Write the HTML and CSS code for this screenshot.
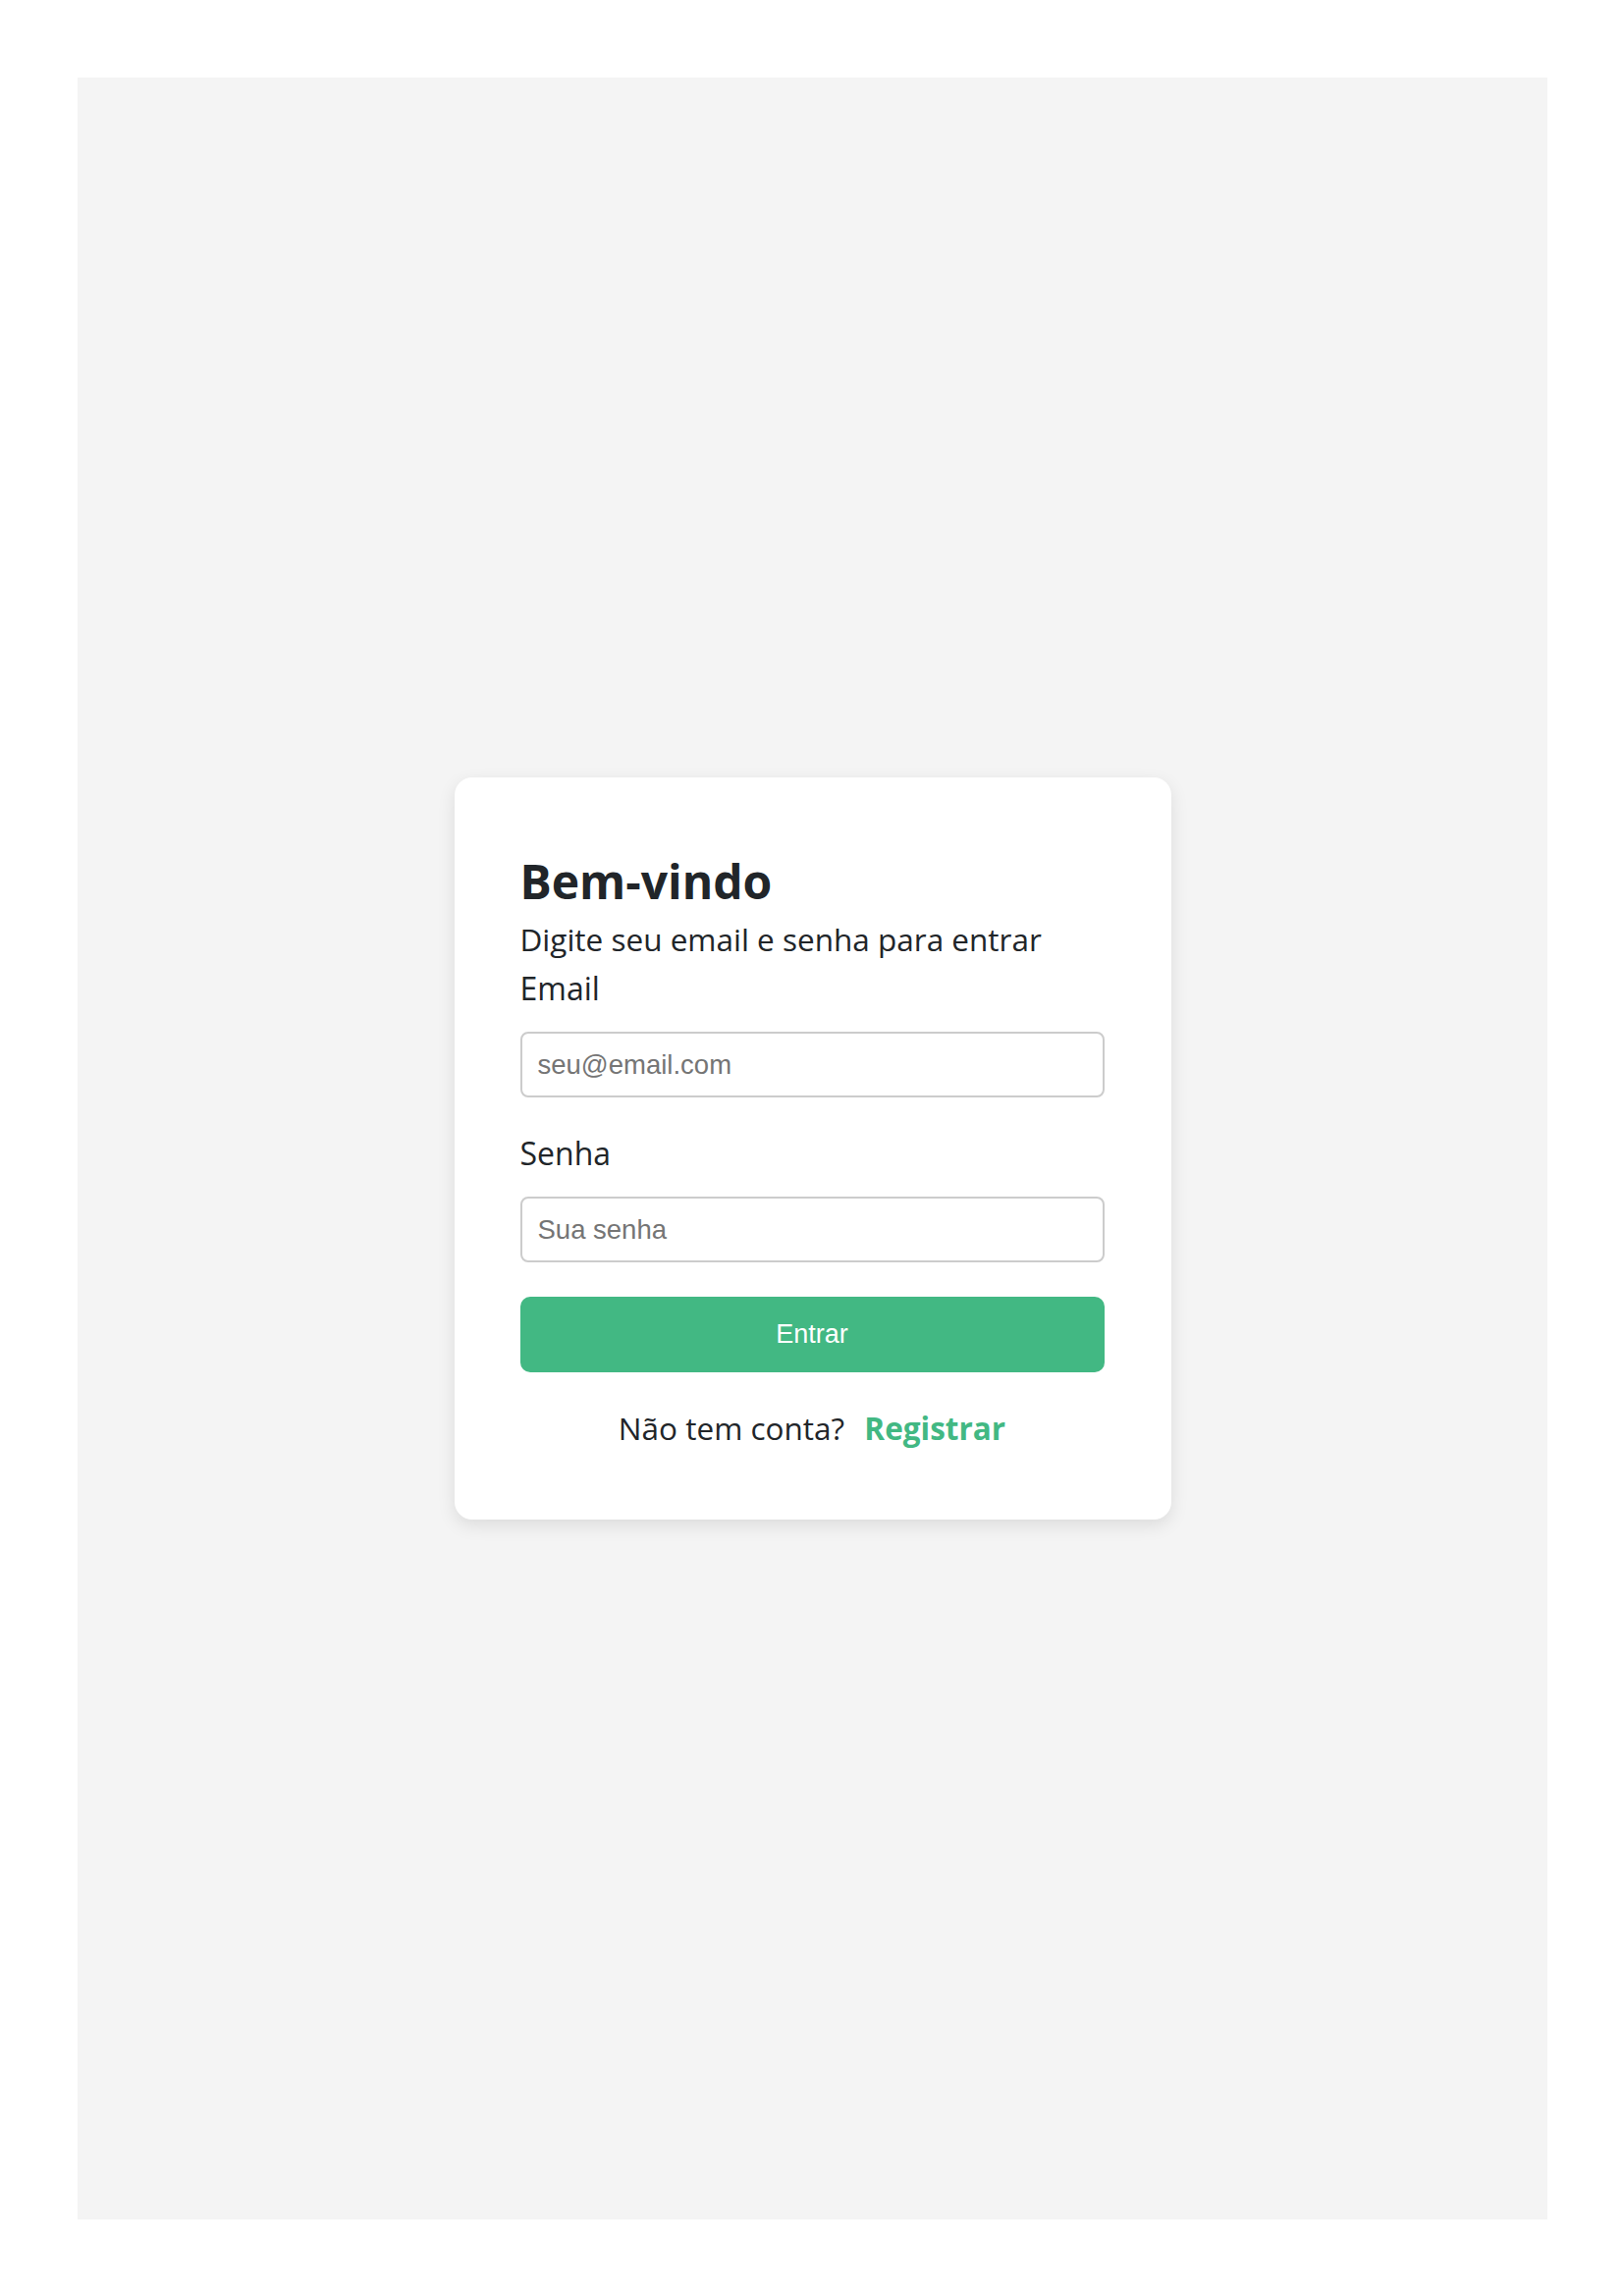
FILE: index.html
```html
<!DOCTYPE html>
<html lang="pt-BR">
<head>
<meta charset="utf-8">
<title>Login</title>
<link rel="stylesheet" href="styles.css">
</head>
<body>
<main class="page">
  <section class="card">
    <h1 class="title">Bem-vindo</h1>
    <p class="subtitle">Digite seu email e senha para entrar</p>
    <form class="form">
      <label class="label" for="email">Email</label>
      <input class="input" id="email" type="email" placeholder="seu@email.com">
      <label class="label label-gap" for="senha">Senha</label>
      <input class="input" id="senha" type="password" placeholder="Sua senha">
      <button class="button" type="button">Entrar</button>
    </form>
    <p class="footer">Não tem conta? <a class="link" href="#">Registrar</a></p>
  </section>
</main>
</body>
</html>
```
FILE: styles.css
```css
html, body {
  margin: 0;
  padding: 0;
  background: #ffffff;
}
body {
  padding: 79px 77px 78px 79px;
  font-family: "Open Sans", "Noto Sans", sans-serif;
  color: #212529;
}
.page {
  background: #f4f4f4;
  height: 2182px;
  display: flex;
  align-items: center;
  justify-content: center;
}
.card {
  box-sizing: border-box;
  width: 730px;
  height: 756px;
  background: #ffffff;
  border-radius: 18px;
  box-shadow: 0 6px 18px rgba(0, 0, 0, 0.10);
  padding: 78px 68px 0 67px;
}
.title {
  margin: 0;
  font-size: 48px;
  line-height: 56px;
  font-weight: 700;
}
.subtitle {
  margin: 7px 0 0;
  font-size: 31.5px;
  line-height: 48px;
}
.form {
  display: flex;
  flex-direction: column;
  margin-top: 2px;
}
.label {
  font-size: 32px;
  line-height: 48px;
}
.label-gap {
  margin-top: 33px;
}
.input {
  box-sizing: border-box;
  height: 67px;
  margin-top: 20px;
  border: 2px solid #cccccc;
  border-radius: 8px;
  padding: 0 16px;
  font-family: "Liberation Sans", Arial, sans-serif;
  font-size: 27.5px;
  color: #333;
  background: #fff;
}
.input::placeholder {
  color: #757575;
}
.button {
  box-sizing: border-box;
  height: 77px;
  margin-top: 35px;
  border: none;
  border-radius: 10px;
  background: #42b883;
  color: #ffffff;
  font-family: "Liberation Sans", Arial, sans-serif;
  font-size: 27px;
}
.footer {
  margin: 33px 0 0;
  text-align: center;
  font-size: 31.5px;
  line-height: 48px;
}
.link {
  margin-left: 12px;
  color: #42b883;
  font-weight: 700;
  text-decoration: none;
}
```
